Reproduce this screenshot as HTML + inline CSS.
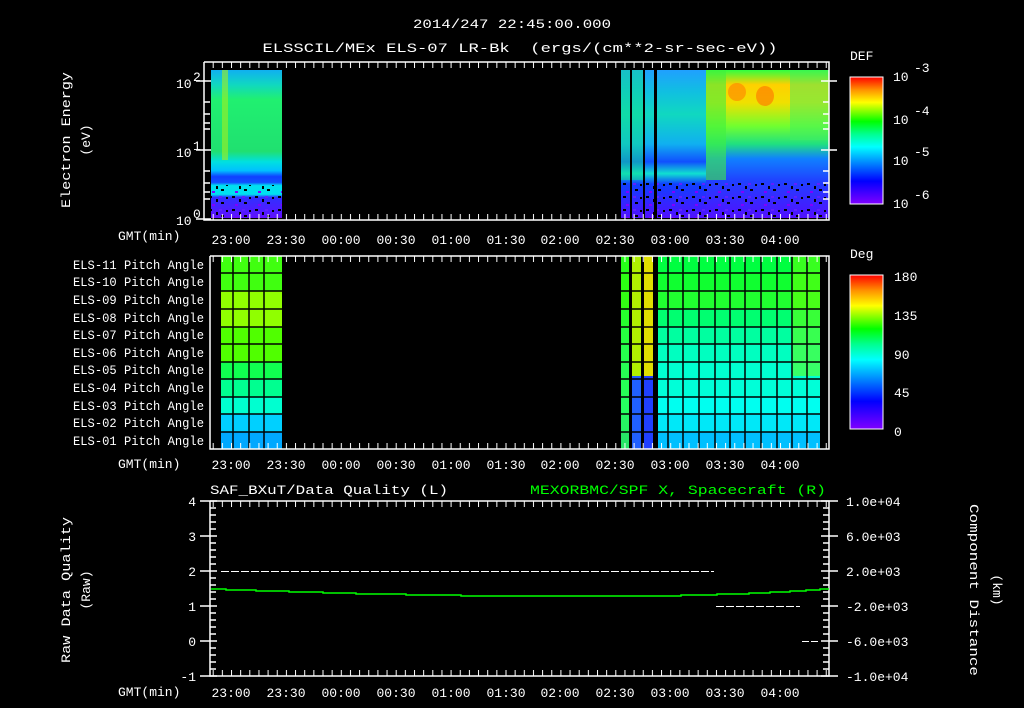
<!DOCTYPE html>
<html><head><meta charset="utf-8"><style>
html,body{margin:0;padding:0;background:#000;width:1024px;height:708px;overflow:hidden}
svg{display:block}
text{font-family:"Liberation Mono",monospace;fill:#fff;font-size:13px}
</style></head><body>
<svg width="1024" height="708" viewBox="0 0 1024 708" xmlns="http://www.w3.org/2000/svg">
<defs>
<pattern id="tkT" x="231" y="0" width="9.15" height="708" patternUnits="userSpaceOnUse"><rect x="0" y="0" width="1" height="708" fill="#fff"/></pattern>
<linearGradient id="rb" x1="0" y1="1" x2="0" y2="0">
<stop offset="0" stop-color="#8000ff"/><stop offset="0.18" stop-color="#0000ff"/><stop offset="0.35" stop-color="#00a0ff"/><stop offset="0.45" stop-color="#00ffff"/><stop offset="0.55" stop-color="#00ff90"/><stop offset="0.65" stop-color="#00ff00"/><stop offset="0.8" stop-color="#ffff00"/><stop offset="0.9" stop-color="#ff9000"/><stop offset="1" stop-color="#ff0000"/></linearGradient>
<linearGradient id="specL" x1="0" y1="0" x2="0" y2="1">
<stop offset="0" stop-color="#10b0f0"/><stop offset="0.1" stop-color="#10d8c0"/><stop offset="0.2" stop-color="#20f070"/><stop offset="0.55" stop-color="#20e070"/><stop offset="0.62" stop-color="#00e0e0"/><stop offset="0.68" stop-color="#00c0ff"/><stop offset="0.72" stop-color="#1040ff"/><stop offset="0.76" stop-color="#1050ff"/><stop offset="0.78" stop-color="#00e0f0"/><stop offset="0.84" stop-color="#00e0f0"/><stop offset="0.86" stop-color="#3030ff"/><stop offset="1" stop-color="#6010ff"/></linearGradient>
<linearGradient id="specR" x1="0" y1="0" x2="0" y2="1">
<stop offset="0" stop-color="#20a0ff"/><stop offset="0.15" stop-color="#10c0e0"/><stop offset="0.3" stop-color="#10d8c0"/><stop offset="0.5" stop-color="#10b0f0"/><stop offset="0.62" stop-color="#1050ff"/><stop offset="0.7" stop-color="#10e0d0"/><stop offset="0.77" stop-color="#1040ff"/><stop offset="1" stop-color="#5010ff"/></linearGradient>
<linearGradient id="specR2" x1="0" y1="0" x2="0" y2="1">
<stop offset="0" stop-color="#30ff40"/><stop offset="0.1" stop-color="#ffd000"/><stop offset="0.22" stop-color="#f0e000"/><stop offset="0.38" stop-color="#70ff30"/><stop offset="0.5" stop-color="#20e080"/><stop offset="0.6" stop-color="#1080ff"/><stop offset="0.75" stop-color="#2040ff"/><stop offset="1" stop-color="#5010ff"/></linearGradient>
<pattern id="noise" x="0" y="0" width="23" height="13" patternUnits="userSpaceOnUse"><rect x="2" y="1" width="3" height="2" fill="#000"/><rect x="14" y="7" width="3" height="2" fill="#000"/><rect x="9" y="4" width="2" height="3" fill="#000"/><rect x="19" y="2" width="2" height="2" fill="#000"/><rect x="5" y="9" width="3" height="2" fill="#8000ff"/><rect x="12" y="1" width="3" height="2" fill="#6020ff"/></pattern>
</defs>

<text x="512" y="28" text-anchor="middle" font-size="16" textLength="198" lengthAdjust="spacingAndGlyphs">2014/247 22:45:00.000</text>
<text x="520" y="52" text-anchor="middle" font-size="16" textLength="515" lengthAdjust="spacingAndGlyphs" xml:space="preserve">ELSSCIL/MEx ELS-07 LR-Bk  (ergs/(cm**2-sr-sec-eV))</text>

<!-- Panel 1 -->
<rect x="211" y="70" width="71" height="148" fill="url(#specL)"/>
<rect x="222" y="70" width="6" height="90" fill="#a0f020" opacity="0.6"/>
<rect x="211" y="185" width="71" height="33" fill="url(#noise)"/>
<rect x="621" y="70" width="85" height="148" fill="url(#specR)"/>
<rect x="621" y="70" width="22" height="110" fill="#10e090" opacity="0.5"/>
<rect x="706" y="70" width="123" height="148" fill="url(#specR2)"/>
<rect x="706" y="70" width="20" height="110" fill="#40f040" opacity="0.6"/>
<rect x="790" y="70" width="39" height="70" fill="#40f060" opacity="0.5"/>
<ellipse cx="737" cy="92" rx="9" ry="9" fill="#ff8000" opacity="0.6"/>
<ellipse cx="765" cy="96" rx="9" ry="10" fill="#ff7000" opacity="0.6"/>
<rect x="621" y="180" width="208" height="38" fill="url(#noise)"/>
<rect x="630" y="70" width="2" height="148" fill="#000"/>
<rect x="643" y="70" width="2" height="148" fill="#000"/>
<rect x="654" y="70" width="3" height="148" fill="#000"/>
<g stroke="#fff" stroke-width="1.5" fill="none"><path d="M204 62V220H829V62H204"/>
<path d="M196 81H211M196 150H211M196 219H211M821 81H837M821 150H837"/>
<path d="M204 102h6M204 114h6M204 123h6M204 129h6M204 171h6M204 183h6M204 192h6M204 199h6M823 102h6M823 114h6M823 123h6M823 129h6M823 171h6M823 183h6M823 192h6M823 199h6"/></g>
<rect x="205" y="62" width="623" height="6" fill="url(#tkT)"/>
<rect x="205" y="214" width="623" height="6" fill="url(#tkT)"/>
<text x="176" y="88" font-size="13">10</text><text x="193" y="81" font-size="9">2</text>
<text x="176" y="157" font-size="13">10</text><text x="193" y="150" font-size="9">1</text>
<text x="176" y="225" font-size="13">10</text><text x="193" y="218" font-size="9">0</text>
<text transform="translate(70,140) rotate(-90)" text-anchor="middle" font-size="15" textLength="136" lengthAdjust="spacingAndGlyphs">Electron Energy</text>
<text transform="translate(90,140) rotate(-90)" text-anchor="middle" font-size="15">(eV)</text>
<text x="850" y="60" font-size="16">DEF</text>
<rect x="850" y="77" width="33" height="127" fill="url(#rb)" stroke="#fff"/>
<text x="893" y="81" font-size="16">10</text><text x="914" y="72" font-size="11">-3</text>
<text x="893" y="124" font-size="16">10</text><text x="914" y="115" font-size="11">-4</text>
<text x="893" y="165" font-size="16">10</text><text x="914" y="156" font-size="11">-5</text>
<text x="893" y="208" font-size="16">10</text><text x="914" y="199" font-size="11">-6</text>

<g font-size="13" text-anchor="middle">
<text x="231" y="244">23:00</text><text x="286" y="244">23:30</text><text x="341" y="244">00:00</text><text x="396" y="244">00:30</text><text x="451" y="244">01:00</text><text x="506" y="244">01:30</text><text x="560" y="244">02:00</text><text x="615" y="244">02:30</text><text x="670" y="244">03:00</text><text x="725" y="244">03:30</text><text x="780" y="244">04:00</text>
<text x="231" y="469">23:00</text><text x="286" y="469">23:30</text><text x="341" y="469">00:00</text><text x="396" y="469">00:30</text><text x="451" y="469">01:00</text><text x="506" y="469">01:30</text><text x="560" y="469">02:00</text><text x="615" y="469">02:30</text><text x="670" y="469">03:00</text><text x="725" y="469">03:30</text><text x="780" y="469">04:00</text>
<text x="231" y="697">23:00</text><text x="286" y="697">23:30</text><text x="341" y="697">00:00</text><text x="396" y="697">00:30</text><text x="451" y="697">01:00</text><text x="506" y="697">01:30</text><text x="560" y="697">02:00</text><text x="615" y="697">02:30</text><text x="670" y="697">03:00</text><text x="725" y="697">03:30</text><text x="780" y="697">04:00</text>
</g>
<text x="118" y="240" font-size="13">GMT(min)</text>
<text x="118" y="468" font-size="13">GMT(min)</text>
<text x="118" y="696" font-size="13">GMT(min)</text>

<!-- Panel 2 -->
<g>
<rect x="221" y="256" width="61" height="35" fill="#40ff10"/>
<rect x="221" y="291" width="61" height="36" fill="#90ff00"/>
<rect x="221" y="327" width="61" height="35" fill="#50ff00"/>
<rect x="221" y="362" width="61" height="17" fill="#10ff50"/>
<rect x="221" y="379" width="61" height="18" fill="#00ff90"/>
<rect x="221" y="397" width="61" height="17" fill="#00ffd0"/>
<rect x="221" y="414" width="61" height="18" fill="#00d0ff"/>
<rect x="221" y="432" width="61" height="17" fill="#00a8ff"/>

<rect x="621" y="256" width="199" height="17" fill="#00ff40"/>
<rect x="621" y="273" width="199" height="18" fill="#10ff30"/>
<rect x="621" y="291" width="199" height="18" fill="#20ff30"/>
<rect x="621" y="309" width="199" height="18" fill="#00ff70"/>
<rect x="621" y="327" width="199" height="17" fill="#00ffa0"/>
<rect x="621" y="344" width="199" height="18" fill="#00ffc0"/>
<rect x="621" y="362" width="199" height="17" fill="#00ffd0"/>
<rect x="621" y="379" width="199" height="18" fill="#00ffd8"/>
<rect x="621" y="397" width="199" height="17" fill="#00fff0"/>
<rect x="621" y="414" width="199" height="18" fill="#00e8f8"/>
<rect x="621" y="432" width="199" height="17" fill="#00c0ff"/>
<rect x="621" y="256" width="8" height="193" fill="#40ff00" opacity="0.6"/>
<rect x="632" y="256" width="9" height="120" fill="#b0f000"/>
<rect x="632" y="376" width="9" height="73" fill="#2060ff"/>
<rect x="644" y="256" width="9" height="120" fill="#e0e000"/>
<rect x="644" y="376" width="9" height="73" fill="#2040ff"/>
<rect x="792" y="256" width="28" height="120" fill="#70ff00" opacity="0.5"/>
</g>
<g stroke="#000" stroke-width="1.5">
<path d="M233 256V449M249 256V449M264 256V449M668 256V449M683 256V449M699 256V449M715 256V449M730 256V449M745 256V449M761 256V449M777 256V449M792 256V449M807 256V449"/>
<path d="M221 273H282M221 291H282M221 309H282M221 327H282M221 344H282M221 362H282M221 379H282M221 397H282M221 414H282M221 432H282"/>
<path d="M621 273H820M621 291H820M621 309H820M621 327H820M621 344H820M621 362H820M621 379H820M621 397H820M621 414H820M621 432H820"/>
</g>
<rect x="629" y="256" width="3" height="193" fill="#000"/>
<rect x="641" y="256" width="3" height="193" fill="#000"/>
<rect x="653" y="256" width="5" height="193" fill="#000"/>
<g stroke="#fff" stroke-width="1.5" fill="none"><path d="M210 256V449H829V256H210"/></g>
<rect x="211" y="256" width="617" height="6" fill="url(#tkT)"/>
<rect x="211" y="443" width="617" height="6" fill="url(#tkT)"/>
<g font-size="12" text-anchor="end">
<text x="204" y="269" textLength="131" lengthAdjust="spacingAndGlyphs">ELS-11 Pitch Angle</text><text x="204" y="286" textLength="131" lengthAdjust="spacingAndGlyphs">ELS-10 Pitch Angle</text><text x="204" y="304" textLength="131" lengthAdjust="spacingAndGlyphs">ELS-09 Pitch Angle</text><text x="204" y="322" textLength="131" lengthAdjust="spacingAndGlyphs">ELS-08 Pitch Angle</text><text x="204" y="339" textLength="131" lengthAdjust="spacingAndGlyphs">ELS-07 Pitch Angle</text><text x="204" y="357" textLength="131" lengthAdjust="spacingAndGlyphs">ELS-06 Pitch Angle</text><text x="204" y="374" textLength="131" lengthAdjust="spacingAndGlyphs">ELS-05 Pitch Angle</text><text x="204" y="392" textLength="131" lengthAdjust="spacingAndGlyphs">ELS-04 Pitch Angle</text><text x="204" y="410" textLength="131" lengthAdjust="spacingAndGlyphs">ELS-03 Pitch Angle</text><text x="204" y="427" textLength="131" lengthAdjust="spacingAndGlyphs">ELS-02 Pitch Angle</text><text x="204" y="445" textLength="131" lengthAdjust="spacingAndGlyphs">ELS-01 Pitch Angle</text>
</g>
<text x="850" y="258" font-size="16">Deg</text>
<rect x="850" y="275" width="33" height="154" fill="url(#rb)" stroke="#fff"/>
<g font-size="16"><text x="894" y="281">180</text><text x="894" y="320">135</text><text x="894" y="359">90</text><text x="894" y="397">45</text><text x="894" y="436">0</text></g>

<!-- Panel 3 -->
<text x="210" y="494" font-size="15" textLength="238" lengthAdjust="spacingAndGlyphs">SAF_BXuT/Data Quality (L)</text>
<text x="826" y="494" font-size="15" text-anchor="end" style="fill:#00ff00" textLength="296" lengthAdjust="spacingAndGlyphs">MEXORBMC/SPF X, Spacecraft (R)</text>
<rect x="211" y="501" width="617" height="6" fill="url(#tkT)"/>
<rect x="211" y="670" width="617" height="6" fill="url(#tkT)"/>
<g stroke="#fff" stroke-width="1.5" fill="none">
<path d="M210 501V676H829V501H210"/>
<path d="M200 501h17M200 536h17M200 571h17M200 606h17M200 641h17M200 676h17M821 501h17M821 536h17M821 571h17M821 606h17M821 641h17M821 676h17"/>
<path d="M210 508h6M210 515h6M210 522h6M210 529h6M210 543h6M210 550h6M210 557h6M210 564h6M210 578h6M210 585h6M210 592h6M210 599h6M210 613h6M210 620h6M210 627h6M210 634h6M210 648h6M210 655h6M210 662h6M210 669h6"/>
<path d="M823 508h6M823 515h6M823 522h6M823 529h6M823 543h6M823 550h6M823 557h6M823 564h6M823 578h6M823 585h6M823 592h6M823 599h6M823 613h6M823 620h6M823 627h6M823 634h6M823 648h6M823 655h6M823 662h6M823 669h6"/>
</g>
<g stroke="#fff" stroke-width="1" fill="none" shape-rendering="crispEdges">
<path d="M221 571.5H714" stroke-dasharray="8 2"/>
<path d="M716 606.5H800" stroke-dasharray="8 2"/>
<path d="M802 641.5H818" stroke-dasharray="7 2"/>
</g>
<path d="M211 589H226V590H256V591H289V592H323V593H356V594H406V595H461V596H681V595H717V594H749V593H770V592H790V591H806V590H820V589H829" stroke="#00ff00" stroke-width="1.5" fill="none"/>
<g font-size="14" text-anchor="end"><text x="196" y="506">4</text><text x="196" y="541">3</text><text x="196" y="576">2</text><text x="196" y="611">1</text><text x="196" y="646">0</text><text x="196" y="681">-1</text></g>
<g font-size="13"><text x="846" y="506">1.0e+04</text><text x="846" y="541">6.0e+03</text><text x="846" y="576">2.0e+03</text><text x="846" y="611">-2.0e+03</text><text x="846" y="646">-6.0e+03</text><text x="846" y="681">-1.0e+04</text></g>
<text transform="translate(70,590) rotate(-90)" text-anchor="middle" font-size="15" textLength="146" lengthAdjust="spacingAndGlyphs">Raw Data Quality</text>
<text transform="translate(90,590) rotate(-90)" text-anchor="middle" font-size="15">(Raw)</text>
<text transform="translate(970,590) rotate(90)" text-anchor="middle" font-size="15" textLength="172" lengthAdjust="spacingAndGlyphs">Component Distance</text>
<text transform="translate(993,590) rotate(90)" text-anchor="middle" font-size="15">(km)</text>
</svg>
</body></html>
